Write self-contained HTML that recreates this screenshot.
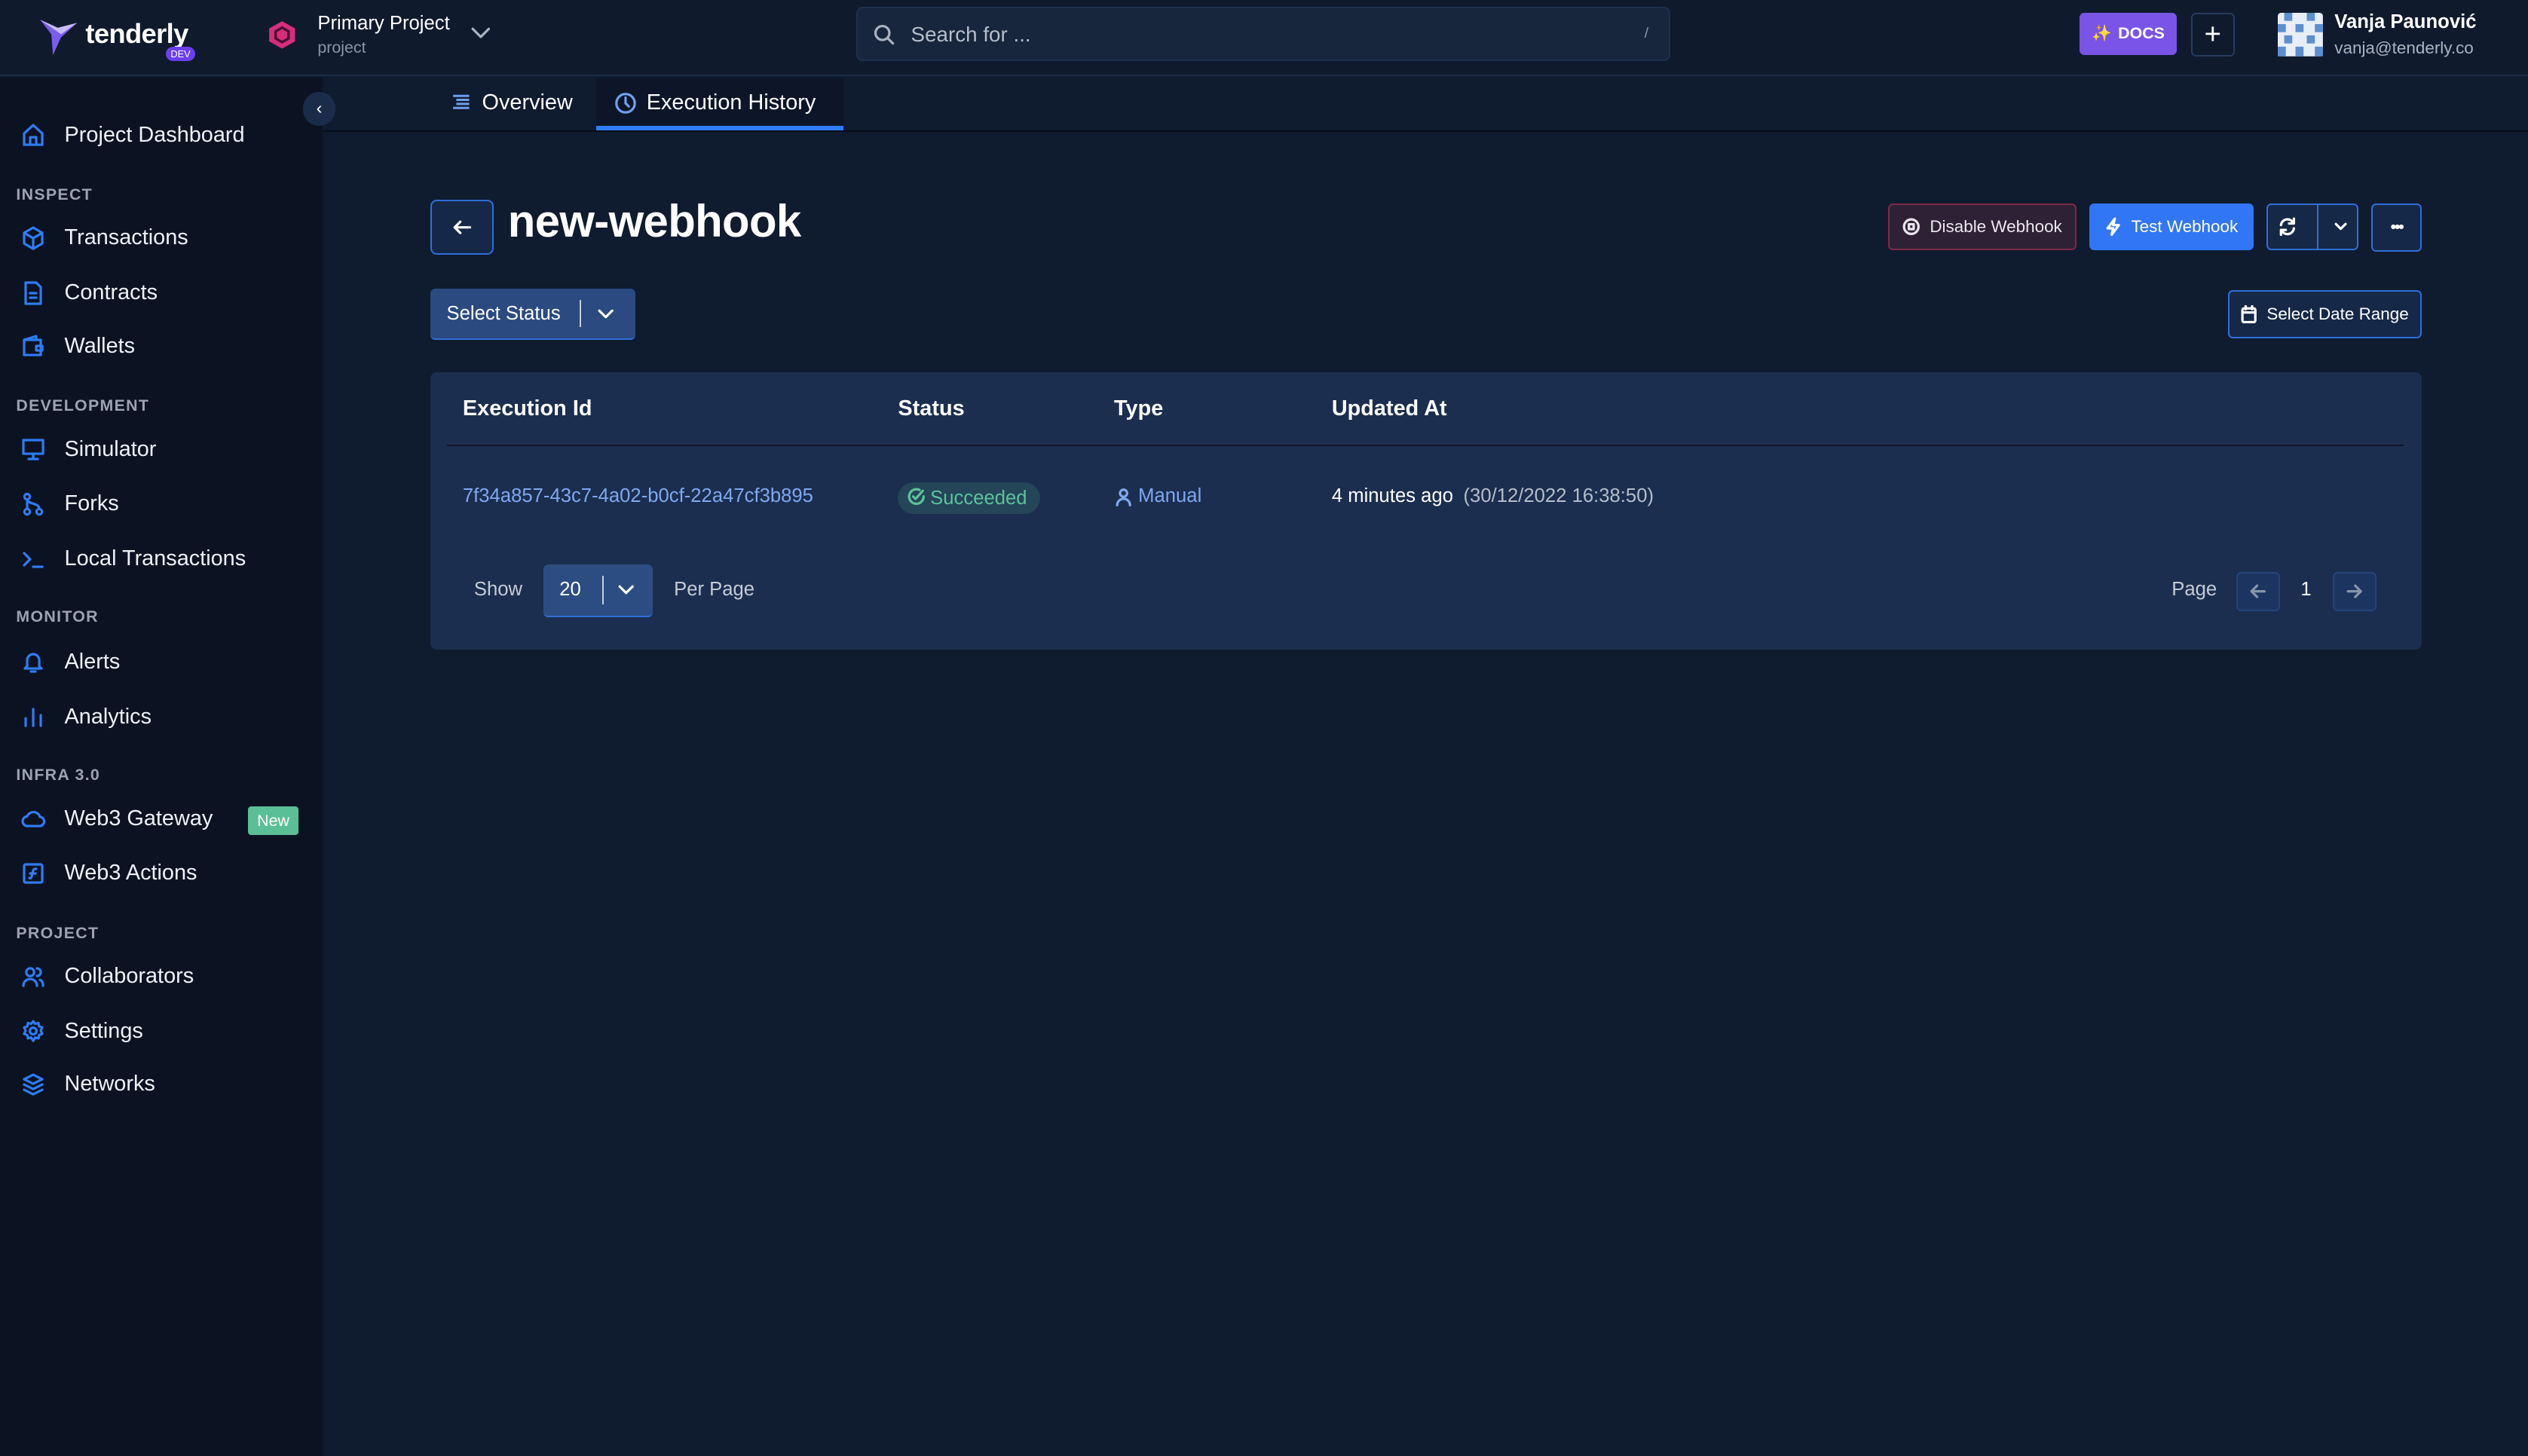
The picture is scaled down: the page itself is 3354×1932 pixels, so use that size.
<!DOCTYPE html>
<html><head><meta charset="utf-8"><style>
*{box-sizing:border-box;margin:0;padding:0}
html,body{width:3354px;height:1932px;overflow:hidden;background:#0f1a2d}
#r{zoom:2.139;width:1568px;height:904px;position:relative;font-family:"Liberation Sans",sans-serif;color:#e8edf5;background:#0f1b2e}
.abs{position:absolute}
.top{left:0;top:0;width:1568px;height:47px;background:#0f1a2c;border-bottom:1px solid #1c2b45}
.side{left:0;top:48px;width:200px;height:856px;background:#0b1322}
.nav{position:absolute;left:13px;font-size:13.5px;color:#eef2f8;display:flex;align-items:center}
.nav svg{width:15px;height:15px;margin-right:12px;fill:none;stroke:#2f7cf6;stroke-width:1.6;stroke-linecap:round;stroke-linejoin:round}
.sec{position:absolute;left:10px;font-size:10px;font-weight:bold;color:#9aa3b1;letter-spacing:.6px}
.btn{position:absolute;border-radius:3px;font-size:10.5px;display:flex;align-items:center;justify-content:center}
.ico{fill:none;stroke:currentColor;stroke-width:1.5;stroke-linecap:round;stroke-linejoin:round}
</style></head><body><div id="r">
<div class="abs top"></div>
<!-- logo -->
<svg class="abs" style="left:24px;top:11px" width="26" height="24" viewBox="0 0 26 24"><path d="M1 1 L12 6 L24 3 L14 12 L9 23 L8 10 Z" fill="#7b5cf0"/><path d="M1 1 L12 6 L24 3 L14 10 Z" fill="#c8bcf8"/></svg>
<div class="abs" style="left:53px;top:11px;font-size:17px;font-weight:bold;color:#fff;letter-spacing:-.3px">tenderly</div>
<div class="abs" style="left:103px;top:29px;width:18px;height:9px;border-radius:5px;background:#6b3ff0;font-size:6px;color:#fff;text-align:center;line-height:9px">DEV</div>
<svg class="abs" style="left:166px;top:12px" width="18" height="19" viewBox="0 0 18 19"><path d="M9 1 L17 5.5 V13.5 L9 18 L1 13.5 V5.5Z" fill="#d62e7c"/><path d="M9 5 L13 7.3 V11.7 L9 14 L5 11.7 V7.3Z" fill="none" stroke="#4a1030" stroke-width="1.6"/></svg>
<div class="abs" style="left:197px;top:8px;font-size:12px;color:#fff">Primary Project</div>
<div class="abs" style="left:197px;top:24px;font-size:10px;color:#8b95a5">project</div>
<svg class="abs ico" style="left:292px;top:16px;color:#aab3c0" width="12" height="10" viewBox="0 0 12 10"><path d="M1 2 L6 7 L11 2"/></svg>
<div class="abs" style="left:531px;top:4px;width:505px;height:34px;border-radius:4px;background:#17253d;border:1px solid #1f3050"></div>
<svg class="abs ico" style="left:542px;top:15px;color:#aab3c0" width="13" height="13" viewBox="0 0 13 13"><circle cx="5.5" cy="5.5" r="4.3"/><path d="M9 9 L12 12"/></svg>
<div class="abs" style="left:565px;top:14px;font-size:13px;color:#b5bdc9">Search for ...</div>
<div class="abs" style="left:1020px;top:16px;font-size:9px;color:#8b95a5">/</div>
<div class="btn" style="left:1290px;top:8px;width:60px;height:26px;background:#7a54e6;font-weight:bold;font-size:10px;color:#fff"><span style="color:#ffd43b;margin-right:4px">✨</span>DOCS</div>
<div class="btn" style="left:1359px;top:8px;width:27px;height:27px;border:1px solid #263c5e;font-size:18px;color:#fff">+</div>
<svg class="abs" style="left:1413px;top:8px" width="28" height="27" viewBox="0 0 28 27"><rect width="28" height="27" rx="2" fill="#e8eef6"/><g fill="#5c8ed0"><rect x="4" y="0" width="5" height="5"/><rect x="18" y="0" width="5" height="5"/><rect x="0" y="7" width="5" height="5"/><rect x="11" y="7" width="5" height="5"/><rect x="23" y="7" width="5" height="5"/><rect x="4" y="14" width="5" height="5"/><rect x="18" y="14" width="5" height="5"/><rect x="0" y="21" width="5" height="6"/><rect x="11" y="21" width="5" height="6"/><rect x="23" y="21" width="5" height="6"/></g></svg>
<div class="abs" style="left:1448px;top:7px;font-size:12px;font-weight:bold;color:#fff">Vanja Paunović</div>
<div class="abs" style="left:1448px;top:24px;font-size:10.5px;color:#aab3c0">vanja@tenderly.co</div>

<div class="abs side"></div>
<div class="abs" style="left:188px;top:57px;width:20px;height:21px;border-radius:10px;background:#1a2c4a;color:#fff;font-size:11px;text-align:center;line-height:20px">‹</div>
<div class="nav" style="top:76px"><svg viewBox="0 0 16 16"><path d="M2 7 L8 1.5 L14 7 V14.5 H2Z M6 14.5 V9.5 H10 V14.5"/></svg>Project Dashboard</div>
<div class="sec" style="top:115px">INSPECT</div>
<div class="nav" style="top:140px"><svg viewBox="0 0 16 16"><path d="M8 1 L14 4.5 V11.5 L8 15 L2 11.5 V4.5Z M2 4.5 L8 8 L14 4.5 M8 8 V15"/></svg>Transactions</div>
<div class="nav" style="top:174px"><svg viewBox="0 0 16 16"><path d="M3 1 H10 L13 4 V15 H3Z M6 8 H10 M6 11 H10"/></svg>Contracts</div>
<div class="nav" style="top:207px"><svg viewBox="0 0 16 16"><path d="M2 4 H13 V14 H2Z M2 4 L10 1.5 V4 M10 8 H14 V11 H10Z"/></svg>Wallets</div>
<div class="sec" style="top:246px">DEVELOPMENT</div>
<div class="nav" style="top:271px"><svg viewBox="0 0 16 16"><path d="M1.5 2 H14.5 V11 H1.5Z M5 14.5 H11 M8 11 V14.5"/></svg>Simulator</div>
<div class="nav" style="top:305px"><svg viewBox="0 0 16 16"><circle cx="4" cy="3" r="1.8"/><circle cx="4" cy="13" r="1.8"/><circle cx="12" cy="13" r="1.8"/><path d="M4 5 V11 M4 5 C4 8 12 7 12 11"/></svg>Forks</div>
<div class="nav" style="top:339px"><svg viewBox="0 0 16 16"><path d="M2 4 L6 8 L2 12 M8 13 H14"/></svg>Local Transactions</div>
<div class="sec" style="top:377px">MONITOR</div>
<div class="nav" style="top:403px"><svg viewBox="0 0 16 16"><path d="M4 11 V7 A4 4 0 0 1 12 7 V11 L13.5 12.5 H2.5Z M6.5 14.5 H9.5"/></svg>Alerts</div>
<div class="nav" style="top:437px"><svg viewBox="0 0 16 16"><path d="M3 14 V9 M8 14 V3 M13 14 V7"/></svg>Analytics</div>
<div class="sec" style="top:475px">INFRA 3.0</div>
<div class="nav" style="top:500px"><svg viewBox="0 0 16 16"><path d="M4.5 13 A3.2 3.2 0 0 1 4 6.6 A4.5 4.5 0 0 1 12.5 7 A3 3 0 0 1 12 13Z"/></svg>Web3 Gateway</div>
<div class="abs" style="left:154px;top:500px;width:31px;height:18px;border-radius:2px;background:#5bbf96;font-size:10px;color:#fff;text-align:center;line-height:18px">New</div>
<div class="nav" style="top:534px"><svg viewBox="0 0 16 16"><rect x="2" y="2" width="12" height="12" rx="1"/><path d="M10 5 C8 4.5 8 6 7.5 8 S7 11.5 5.5 11 M6 8 H9.5"/></svg>Web3 Actions</div>
<div class="sec" style="top:573px">PROJECT</div>
<div class="nav" style="top:598px"><svg viewBox="0 0 16 16"><circle cx="6" cy="5" r="2.6"/><path d="M1.5 14 A4.5 4.5 0 0 1 10.5 14 M10.5 2.5 A2.5 2.5 0 0 1 10.5 7.5 M12.5 10 A4 4 0 0 1 14.5 14"/></svg>Collaborators</div>
<div class="nav" style="top:632px"><svg viewBox="0 0 16 16"><circle cx="8" cy="8" r="2.2"/><path d="M8 1.5 L9.3 3.3 L11.5 2.7 L11.9 4.9 L14 5.7 L13 7.7 L14 9.9 L11.9 10.7 L11.5 12.9 L9.3 12.3 L8 14.5 L6.7 12.3 L4.5 12.9 L4.1 10.7 L2 9.9 L3 7.7 L2 5.7 L4.1 4.9 L4.5 2.7 L6.7 3.3Z"/></svg>Settings</div>
<div class="nav" style="top:665px"><svg viewBox="0 0 16 16"><path d="M8 1.5 L14 4.5 L8 7.5 L2 4.5Z M2 8 L8 11 L14 8 M2 11.5 L8 14.5 L14 11.5"/></svg>Networks</div>

<!-- tabs -->
<div class="abs" style="left:200px;top:81px;width:1368px;height:1px;background:#070d18"></div>
<div class="abs" style="left:370px;top:48px;width:153px;height:33px;background:#0c1628"></div>
<div class="abs" style="left:370px;top:78px;width:153px;height:3px;background:#2f7cf6"></div>
<svg class="abs" style="left:280px;top:58px" width="12" height="11" viewBox="0 0 12 11"><path d="M1 1.5 H11 M3 4 H11 M3 6.5 H11 M1 9 H11" stroke="#6fa0ec" stroke-width="1.4"/></svg>
<div class="abs" style="left:299px;top:56px;font-size:13.5px;color:#fff">Overview</div>
<svg class="abs ico" style="left:381px;top:57px;color:#6fa0ec" width="14" height="14" viewBox="0 0 14 14"><circle cx="7" cy="7" r="5.7"/><path d="M7 3.5 V7 L9 9"/></svg>
<div class="abs" style="left:401px;top:56px;font-size:13.5px;color:#fff">Execution History</div>

<!-- header -->
<div class="btn" style="left:267px;top:124px;width:39px;height:34px;background:#152848;border:1px solid #2f6fd8;border-radius:4px"><svg class="ico" width="12" height="10" viewBox="0 0 12 10" style="color:#fff"><path d="M11 5 H1.5 M5 1.5 L1.5 5 L5 8.5"/></svg></div>
<div class="abs" style="left:315px;top:121px;font-size:28px;font-weight:bold;color:#fff;letter-spacing:-.3px">new-webhook</div>
<div class="btn" style="left:1171px;top:126px;width:117px;height:29px;background:#2f2135;border:1px solid #7c2b47;color:#e8e8ee"><svg class="ico" width="11" height="11" viewBox="0 0 11 11" style="margin-right:6px"><circle cx="5.5" cy="5.5" r="4.5"/><rect x="4" y="4" width="3" height="3"/></svg>Disable Webhook</div>
<div class="btn" style="left:1296px;top:126px;width:102px;height:29px;background:#3176f5;color:#fff"><svg class="ico" width="10" height="12" viewBox="0 0 10 12" style="margin-right:6px"><path d="M6 1 L1.5 7 H5 L4 11 L8.5 5 H5Z"/></svg>Test Webhook</div>
<div class="btn" style="left:1406px;top:126px;width:57px;height:29px;background:#152848;border:1px solid #2f6fd8;color:#fff"><svg class="ico" width="12" height="12" viewBox="0 0 12 12" style="margin-right:12px"><path d="M2 5 A4 4 0 0 1 9.5 3.5 M10 1 V4 H7 M10 7 A4 4 0 0 1 2.5 8.5 M2 11 V8 H5"/></svg><span style="width:1px;height:29px;background:#2f6fd8;margin-right:10px"></span><svg class="ico" width="8" height="6" viewBox="0 0 8 6"><path d="M1 1.5 L4 4.5 L7 1.5"/></svg></div>
<div class="btn" style="left:1471px;top:126px;width:31px;height:30px;background:#152848;border:1px solid #2f6fd8;color:#fff;font-weight:bold;font-size:10px;letter-spacing:-1px">•••</div>
<div class="btn" style="left:267px;top:179px;width:127px;height:32px;background:#2a4a80;border-bottom:1px solid #2f6fd8;color:#fff;font-size:12px;justify-content:flex-start;padding-left:10px">Select Status<span style="width:1px;height:17px;background:#c5cede;margin:0 10px 0 12px"></span><svg class="ico" width="10" height="7" viewBox="0 0 10 7"><path d="M1 1.5 L5 5.5 L9 1.5"/></svg></div>
<div class="btn" style="left:1382px;top:180px;width:120px;height:30px;background:#152848;border:1px solid #2f6fd8;color:#fff"><svg class="ico" width="10" height="11" viewBox="0 0 10 11" style="margin-right:6px"><rect x="1" y="2" width="8" height="8.5" rx="1"/><path d="M1 4.5 H9 M3 0.5 V2.5 M7 0.5 V2.5"/></svg>Select Date Range</div>

<!-- table card -->
<div class="abs" style="left:267px;top:231px;width:1235px;height:172px;background:#1b2e4f;border-radius:4px"></div>
<div class="abs" style="left:277px;top:276px;width:1214px;height:1px;background:#0d1628"></div>
<div class="abs" style="left:287px;top:246px;font-size:13.5px;font-weight:bold;color:#fff">Execution Id</div>
<div class="abs" style="left:557px;top:246px;font-size:13.5px;font-weight:bold;color:#fff">Status</div>
<div class="abs" style="left:691px;top:246px;font-size:13.5px;font-weight:bold;color:#fff">Type</div>
<div class="abs" style="left:826px;top:246px;font-size:13.5px;font-weight:bold;color:#fff">Updated At</div>
<div class="abs" style="left:287px;top:301px;font-size:12px;color:#7fa8f0">7f34a857-43c7-4a02-b0cf-22a47cf3b895</div>
<div class="abs" style="left:557px;top:299px;width:88px;height:20px;border-radius:10px;background:#254559;font-size:12px;color:#5cc39a;line-height:20px;padding-left:6px"><svg class="ico" width="11" height="11" viewBox="0 0 11 11" style="vertical-align:-1px;margin-right:3px"><path d="M10 5.5 A4.5 4.5 0 1 1 7.5 1.5 M3.5 5.5 L5 7 L9.5 2"/></svg>Succeeded</div>
<svg class="abs ico" style="left:692px;top:303px;color:#7fa8f0" width="10" height="11" viewBox="0 0 10 11"><circle cx="5" cy="3" r="2.2"/><path d="M1 10.5 A4 4 0 0 1 9 10.5"/></svg>
<div class="abs" style="left:706px;top:301px;font-size:12px;color:#7fa8f0">Manual</div>
<div class="abs" style="left:826px;top:301px;font-size:12px;color:#fff">4 minutes ago <span style="color:#b5bdc9;margin-left:3px">(30/12/2022 16:38:50)</span></div>
<div class="abs" style="left:294px;top:359px;font-size:12px;color:#c5cbd5">Show</div>
<div class="btn" style="left:337px;top:350px;width:68px;height:33px;background:#2b4d82;border-bottom:1px solid #2f6fd8;color:#fff;font-size:12px;justify-content:flex-start;padding-left:10px">20<span style="width:1px;height:18px;background:#c5cede;margin:0 9px 0 13px"></span><svg class="ico" width="10" height="7" viewBox="0 0 10 7"><path d="M1 1.5 L5 5.5 L9 1.5"/></svg></div>
<div class="abs" style="left:418px;top:359px;font-size:12px;color:#c5cbd5">Per Page</div>
<div class="abs" style="left:1347px;top:359px;font-size:12px;color:#c5cbd5">Page</div>
<div class="btn" style="left:1387px;top:355px;width:27px;height:24px;background:#1c3560;border:1px solid #24447a;color:#8795aa"><svg class="ico" width="10" height="9" viewBox="0 0 10 9"><path d="M9 4.5 H1 M4.5 1 L1 4.5 L4.5 8"/></svg></div>
<div class="abs" style="left:1427px;top:359px;font-size:12px;color:#fff">1</div>
<div class="btn" style="left:1447px;top:355px;width:27px;height:24px;background:#1c3560;border:1px solid #24447a;color:#8795aa"><svg class="ico" width="10" height="9" viewBox="0 0 10 9"><path d="M1 4.5 H9 M5.5 1 L9 4.5 L5.5 8"/></svg></div>
</div></body></html>
